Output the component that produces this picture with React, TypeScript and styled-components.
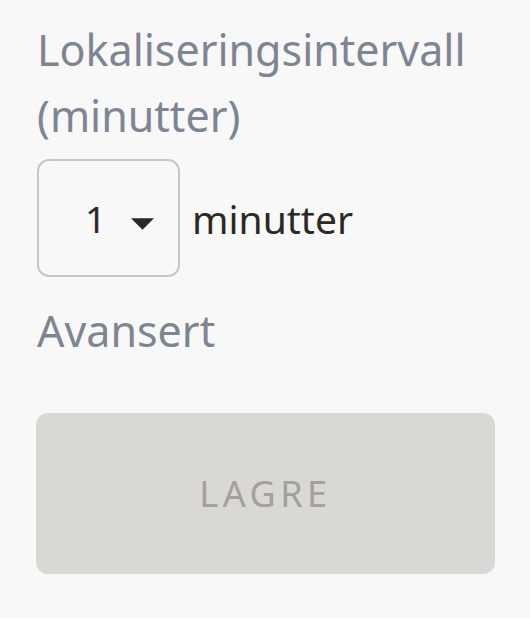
import React from 'react'
import styled, { createGlobalStyle } from 'styled-components'

const GlobalStyle = createGlobalStyle`
  html, body {
    margin: 0;
    padding: 0;
    background: #f8f8f8;
  }
  body {
    font-family: 'Noto Sans', sans-serif;
  }
`

const intervals = [1, 2, 5, 10, 15, 30]

export default function App() {
  return (
    <>
      <GlobalStyle />
      <Page>
        <Label>Lokaliseringsintervall (minutter)</Label>
        <IntervalRow>
          <SelectBox>
            <Select defaultValue={1}>
              {intervals.map((value) => (
                <option key={value} value={value}>
                  {value}
                </option>
              ))}
            </Select>
            <Caret viewBox="0 0 24 12">
              <path d="M0 0 L24 0 L12 12 Z" fill="#2b2825" />
            </Caret>
          </SelectBox>
          <Unit>minutter</Unit>
        </IntervalRow>
        <SubLabel>Avansert</SubLabel>
        <SaveButton disabled>Lagre</SaveButton>
      </Page>
    </>
  )
}

const Page = styled.div`
  display: flex;
  flex-direction: column;
  align-items: flex-start;
  padding: 17px 35px 0 37px;
`

const Label = styled.div`
  width: 456px;
  color: #7e8592;
  font-size: 43px;
  line-height: 66px;
`

const SubLabel = styled(Label)`
  margin-top: 21px;
`

const IntervalRow = styled.div`
  display: flex;
  align-items: center;
  gap: 12px;
  margin-top: 10px;
`

const SelectBox = styled.div`
  position: relative;
  width: 143px;
  height: 118px;
  box-sizing: border-box;
  border: 2.5px solid #c9c6c0;
  border-radius: 12px;
  background: #f8f8f8;
`

const Select = styled.select`
  appearance: none;
  width: 100%;
  height: 100%;
  border: none;
  background: transparent;
  padding: 0 0 0 46px;
  font-family: 'Noto Sans', sans-serif;
  font-size: 37px;
  color: #2b2825;
  outline: none;
`

const Caret = styled.svg`
  position: absolute;
  left: 92px;
  top: 57px;
  width: 23px;
  height: 12px;
  pointer-events: none;
`

const Unit = styled.span`
  color: #2b2825;
  font-size: 39px;
`

const SaveButton = styled.button`
  margin-top: 49px;
  width: 459px;
  height: 161px;
  margin-left: -1px;
  padding: 0;
  border: none;
  border-radius: 12px;
  background: #d9d8d4;
  color: #a3a19d;
  font-family: 'Noto Sans', sans-serif;
  font-size: 36px;
  letter-spacing: 4.5px;
  text-transform: uppercase;
`
